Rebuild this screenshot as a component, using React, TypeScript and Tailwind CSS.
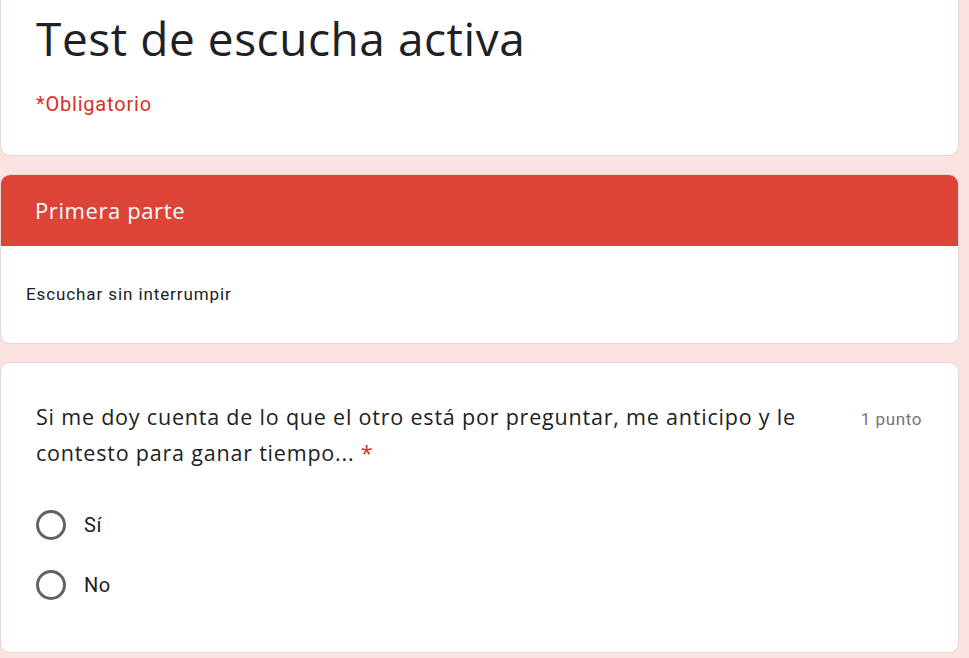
export default function App(){

const gsans = "font-['Open_Sans',sans-serif]"

return(

<div className="min-h-screen bg-[#fae3e1] overflow-hidden">

<div className="w-[959px] flex flex-col gap-[18px]">

{/* Title card */}

<div className="h-[156px] bg-white border border-[#e6d6d4] border-t-0 rounded-b-[10px] pl-[35px] pt-[6px]">

<h1 className={`${gsans} text-[46px] leading-[64px] text-[#202124] tracking-[0.55px]`}>
Test de escucha activa
</h1>

<p className="font-['Roboto',sans-serif] text-[20px] tracking-[0.8px] text-[#d93025] mt-[19px]">
*Obligatorio
</p>

</div>

{/* Section card */}

<div className="h-[170px] bg-white border border-[#e6d6d4] rounded-[10px] overflow-hidden">

<div className="h-[71px] bg-[#db4437] flex items-center pl-[34px]">
<h2 className={`${gsans} text-[22px] tracking-[0.6px] text-white`}>
Primera parte
</h2>
</div>

<p className="font-['Roboto',sans-serif] text-[17px] tracking-[0.9px] text-[#202124] pl-[25px] pt-[36px]">
Escuchar sin interrumpir
</p>

</div>

{/* Question card */}

<div className="h-[291px] bg-white border border-[#e6d6d4] rounded-[10px] pl-[35px] pr-[36px] pt-[36px]">

<div className="flex justify-between gap-6">

<p className={`${gsans} text-[21.5px] leading-[36px] tracking-[0.8px] text-[#202124] max-w-[790px]`}>
Si me doy cuenta de lo que el otro está por preguntar, me anticipo y le contesto para ganar tiempo...{" "}<span className="text-[#d93025]">*</span>
</p>

<span className="font-['Roboto',sans-serif] text-[17px] tracking-[0.6px] text-[#70757a] pt-[8px] whitespace-nowrap">
1 punto
</span>

</div>

<div className="flex flex-col gap-[30px] mt-[39px]">

{["Sí","No"].map((o)=>(

<label key={o} className="flex items-center gap-[18px]">
<span className="w-[30px] h-[30px] rounded-full border-[3px] border-[#5f6368]" />
<span className="font-['Roboto',sans-serif] text-[20px] tracking-[0.6px] text-[#202124]">
{o}
</span>
</label>

))}

</div>

</div>

</div>

</div>

)
}
